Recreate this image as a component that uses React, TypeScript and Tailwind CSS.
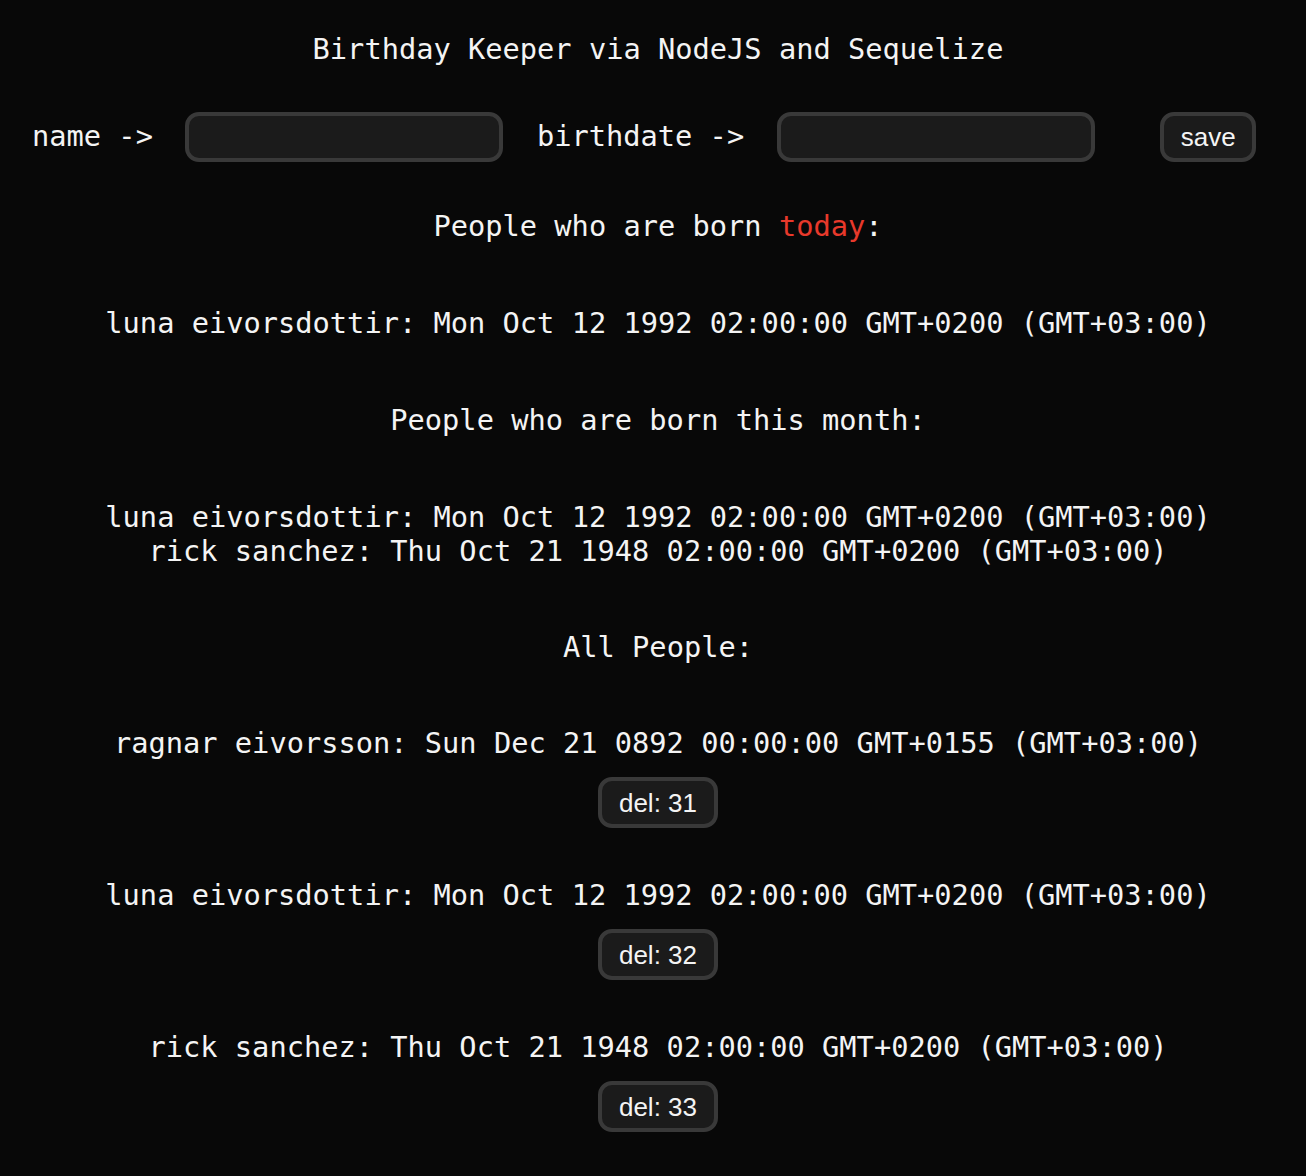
import React from "react";

const mono = { fontFamily: '"DejaVu Sans Mono", monospace' };
const sans = { fontFamily: '"Liberation Sans", Arial, sans-serif' };

function DelButton({ id }: { id: number }) {
  return (
    <button
      className="mt-[17px] h-[51px] w-[120px] rounded-[14px] border-[4px] border-[#393939] bg-[#1b1b1b] text-[26px] leading-none text-[#f4f4f4]"
      style={sans}
    >
      del: {id}
    </button>
  );
}

export default function App() {
  const line = "h-[34px] leading-[34px] whitespace-pre";
  return (
    <div
      className="min-h-[1176px] w-full bg-[#080808] text-[#f4f4f4] text-[28.7px]"
      style={mono}
    >
      <div className="flex flex-col items-center pl-[10px]">
        <div className={`mt-[32px] ${line}`}>Birthday Keeper via NodeJS and Sequelize</div>
      </div>

      <div className="mt-[46px] flex h-[50px] items-center pl-[32px]">
        <span className="whitespace-pre">name -&gt;</span>
        <input
          className="ml-[32px] h-[50px] w-[318px] rounded-[14px] border-[4px] border-[#393939] bg-[#1b1b1b] outline-none"
          type="text"
        />
        <span className="ml-[34px] whitespace-pre">birthdate -&gt;</span>
        <input
          className="ml-[33px] h-[50px] w-[318px] rounded-[14px] border-[4px] border-[#393939] bg-[#1b1b1b] outline-none"
          type="text"
        />
        <button
          className="ml-[65px] h-[50px] w-[96px] rounded-[14px] border-[4px] border-[#393939] bg-[#1b1b1b] text-[26px] leading-none text-[#f4f4f4]"
          style={sans}
        >
          save
        </button>
      </div>

      <div className="flex flex-col items-center pl-[10px]">
        <div className={`mt-[47px] ${line}`}>
          People who are born <span className="text-[#e8392b]">today</span>:
        </div>
        <div className={`mt-[63px] ${line}`}>
          luna eivorsdottir: Mon Oct 12 1992 02:00:00 GMT+0200 (GMT+03:00)
        </div>

        <div className={`mt-[63px] ${line}`}>People who are born this month:</div>
        <div className={`mt-[63px] ${line}`}>
          luna eivorsdottir: Mon Oct 12 1992 02:00:00 GMT+0200 (GMT+03:00)
        </div>
        <div className={line}>rick sanchez: Thu Oct 21 1948 02:00:00 GMT+0200 (GMT+03:00)</div>

        <div className={`mt-[62px] ${line}`}>All People:</div>

        <div className={`mt-[62px] ${line}`}>
          ragnar eivorsson: Sun Dec 21 0892 00:00:00 GMT+0155 (GMT+03:00)
        </div>
        <DelButton id={31} />

        <div className={`mt-[50px] ${line}`}>
          luna eivorsdottir: Mon Oct 12 1992 02:00:00 GMT+0200 (GMT+03:00)
        </div>
        <DelButton id={32} />

        <div className={`mt-[50px] ${line}`}>rick sanchez: Thu Oct 21 1948 02:00:00 GMT+0200 (GMT+03:00)</div>
        <DelButton id={33} />
      </div>
    </div>
  );
}
